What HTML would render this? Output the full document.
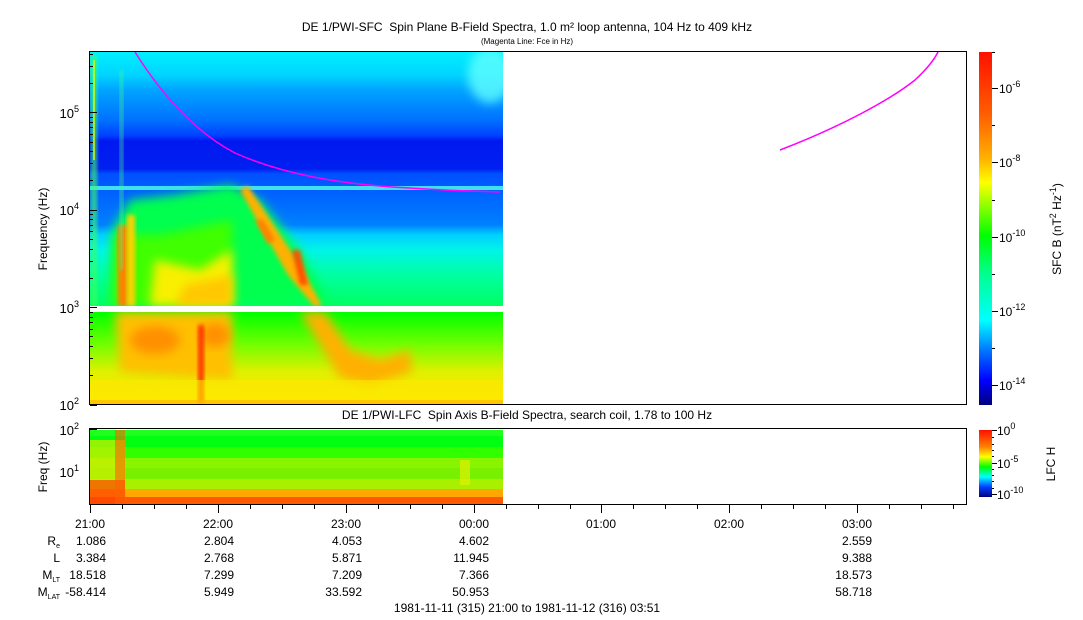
<!DOCTYPE html>
<html><head><meta charset="utf-8"><style>
html,body{margin:0;padding:0;background:#fff;}
svg{display:block;font-family:"Liberation Sans",Arial,sans-serif;}
</style></head><body>
<svg width="1083" height="620" viewBox="0 0 1083 620" xmlns="http://www.w3.org/2000/svg">
<defs>
<linearGradient id="up" x1="0" y1="52" x2="0" y2="306" gradientUnits="userSpaceOnUse">
<stop offset="0" stop-color="#00f0ff"/>
<stop offset="0.09" stop-color="#00d4ff"/>
<stop offset="0.15" stop-color="#00a4ff"/>
<stop offset="0.27" stop-color="#0070ff"/>
<stop offset="0.33" stop-color="#0040ff"/>
<stop offset="0.35" stop-color="#0018f0"/>
<stop offset="0.46" stop-color="#0020f0"/>
<stop offset="0.48" stop-color="#0050ff"/>
<stop offset="0.55" stop-color="#0060ff"/>
<stop offset="0.68" stop-color="#0080ff"/>
<stop offset="0.72" stop-color="#00d0ff"/>
<stop offset="0.78" stop-color="#00f4e8"/>
<stop offset="0.88" stop-color="#00ffa0"/>
<stop offset="1" stop-color="#00ff60"/>
</linearGradient>
<linearGradient id="lo" x1="0" y1="312" x2="0" y2="404" gradientUnits="userSpaceOnUse">
<stop offset="0" stop-color="#00ff00"/>
<stop offset="0.35" stop-color="#70ff00"/>
<stop offset="0.65" stop-color="#e0f000"/>
<stop offset="1" stop-color="#ffe800"/>
</linearGradient>
<linearGradient id="cb1" x1="0" y1="52" x2="0" y2="405" gradientUnits="userSpaceOnUse">
<stop offset="0" stop-color="#ff1000"/>
<stop offset="0.18" stop-color="#ff6000"/>
<stop offset="0.3" stop-color="#ffb000"/>
<stop offset="0.37" stop-color="#ffff00"/>
<stop offset="0.52" stop-color="#00ff00"/>
<stop offset="0.63" stop-color="#00ff90"/>
<stop offset="0.76" stop-color="#00ffff"/>
<stop offset="0.85" stop-color="#0070ff"/>
<stop offset="0.93" stop-color="#0000ff"/>
<stop offset="1" stop-color="#000080"/>
</linearGradient>
<linearGradient id="cb2" x1="0" y1="430" x2="0" y2="497" gradientUnits="userSpaceOnUse">
<stop offset="0" stop-color="#ff1000"/>
<stop offset="0.25" stop-color="#ff8000"/>
<stop offset="0.4" stop-color="#ffff00"/>
<stop offset="0.55" stop-color="#00ff00"/>
<stop offset="0.7" stop-color="#00ffff"/>
<stop offset="0.85" stop-color="#0040ff"/>
<stop offset="1" stop-color="#000080"/>
</linearGradient>
<filter id="bl" x="-20%" y="-20%" width="140%" height="140%"><feGaussianBlur stdDeviation="5"/></filter>
<filter id="bl2" x="-20%" y="-20%" width="140%" height="140%"><feGaussianBlur stdDeviation="2"/></filter>
<clipPath id="cu"><rect x="90" y="52" width="413" height="254"/></clipPath>
<clipPath id="cl"><rect x="90" y="312" width="413" height="92"/></clipPath>
</defs>

<text x="527" y="31" font-size="12" text-anchor="middle" xml:space="preserve">DE 1/PWI-SFC  Spin Plane B-Field Spectra, 1.0 m² loop antenna, 104 Hz to 409 kHz</text>
<text x="527" y="44" font-size="8" text-anchor="middle">(Magenta Line: Fce in Hz)</text>
<text x="527" y="419" font-size="12" text-anchor="middle" xml:space="preserve">DE 1/PWI-LFC  Spin Axis B-Field Spectra, search coil, 1.78 to 100 Hz</text>

<rect x="90" y="52" width="413" height="254" fill="url(#up)"/>
<g clip-path="url(#cu)">
<ellipse cx="490" cy="75" rx="22" ry="28" fill="#60ffff" filter="url(#bl)" opacity="0.8"/>
<rect x="90" y="186" width="413" height="4" fill="#40e0f0"/>
<path d="M110,306 L112,230 L130,200 L175,195 L230,185 L260,200 L300,250 L330,306 Z" fill="#00ff50" filter="url(#bl)"/>
<path d="M112,306 L115,235 L160,235 L232,220 L232,306 Z" fill="#40ff00" filter="url(#bl)"/>
<path d="M150,306 L155,260 L200,270 L232,250 L232,306 Z" fill="#f8f000" filter="url(#bl)"/>
<path d="M175,306 L185,285 L232,275 L232,306 Z" fill="#ffc800" filter="url(#bl)"/>
<rect x="118" y="225" width="10" height="81" fill="#ff8000" filter="url(#bl2)"/>
<rect x="127" y="215" width="8" height="91" fill="#ffd000" filter="url(#bl2)"/>
<path d="M240,190 L248,186 L300,265 L322,306 L314,306 L288,275 Z" fill="#ffb000" filter="url(#bl2)"/>
<path d="M255,220 L263,220 L275,240 L268,244 Z" fill="#ff8000" filter="url(#bl2)"/>
<path d="M292,250 L300,250 L308,285 L300,285 Z" fill="#ff5000" filter="url(#bl2)"/>
<rect x="91" y="55" width="6" height="251" fill="#40ff60" opacity="0.7" filter="url(#bl2)"/>
<rect x="93" y="60" width="2" height="100" fill="#e0ff00" opacity="0.7"/>
<rect x="120" y="70" width="3" height="200" fill="#40ff80" opacity="0.7" filter="url(#bl2)"/>
</g>

<rect x="90" y="312" width="413" height="92" fill="url(#lo)"/>
<g clip-path="url(#cl)">
<path d="M115,312 L232,312 L232,380 L120,372 Z" fill="#ffc000" filter="url(#bl)"/>
<ellipse cx="155" cy="340" rx="25" ry="14" fill="#ff9000" filter="url(#bl)"/>
<ellipse cx="215" cy="335" rx="15" ry="12" fill="#ff9000" filter="url(#bl)"/>
<rect x="198" y="325" width="6" height="79" fill="#ff3000" filter="url(#bl2)"/>
<path d="M300,312 L325,312 L350,350 L380,360 L410,350 L412,372 L370,385 L340,378 Z" fill="#ffb000" filter="url(#bl)"/>
<rect x="90" y="380" width="413" height="24" fill="#ffe800" opacity="0.6"/>
<rect x="90" y="400" width="413" height="4" fill="#ffb000" opacity="0.6"/>
</g>

<path fill="none" stroke="#ff00ff" stroke-width="1.5" d="M135,52 C165,100 200,135 235,153 C280,173 330,182 380,186 C430,190 470,191 500,192"/>
<path fill="none" stroke="#ff00ff" stroke-width="1.5" d="M780,150 C840,127 890,100 915,80 C928,68 934,60 938,52"/>

<rect x="89.5" y="51.5" width="877" height="353" fill="none" stroke="#000"/>
<rect x="89.5" y="428.5" width="877" height="76" fill="none" stroke="#000"/>

<g stroke="#000" stroke-width="1">
<path d="M90,405.5h7M90,307.5h7M90,210.5h7M90,112.5h7"/>
<path d="M90,375.5h3M90,358.5h3M90,346.5h3M90,336.5h3M90,329.5h3M90,322.5h3M90,317.5h3M90,312.5h3
M90,278.5h3M90,261.5h3M90,249.5h3M90,239.5h3M90,231.5h3M90,225.5h3M90,219.5h3M90,214.5h3
M90,180.5h3M90,163.5h3M90,151.5h3M90,142.5h3M90,134.5h3M90,127.5h3M90,122.5h3M90,117.5h3
M90,83.5h3M90,66.5h3M90,54.5h3"/>
<path d="M90,429.5h7M90,472.5h7"/>
<path d="M90,459.5h3M90,452.5h3M90,447.5h3M90,443.5h3M90,440.5h3M90,437.5h3M90,435.5h3M90,433.5h3
M90,474.5h3M90,477.5h3M90,479.5h3M90,482.5h3M90,486.5h3M90,490.5h3M90,495.5h3M90,502.5h3"/>
<path d="M90.5,505v8M218.5,505v8M346.5,505v8M474.5,505v8M601.5,505v8M729.5,505v8M857.5,505v8"/>
<path d="M122.5,505v4M154.5,505v4M186.5,505v4M250.5,505v4M282.5,505v4M314.5,505v4M378.5,505v4M410.5,505v4M442.5,505v4M506.5,505v4M538.5,505v4M570.5,505v4M633.5,505v4M665.5,505v4M697.5,505v4M761.5,505v4M793.5,505v4M825.5,505v4M889.5,505v4M921.5,505v4M953.5,505v4"/>
</g>

<g font-size="13" text-anchor="end">
<text x="79" y="118">10<tspan font-size="9" dy="-6">5</tspan></text>
<text x="79" y="215">10<tspan font-size="9" dy="-6">4</tspan></text>
<text x="79" y="313">10<tspan font-size="9" dy="-6">3</tspan></text>
<text x="79" y="410">10<tspan font-size="9" dy="-6">2</tspan></text>
<text x="79" y="435">10<tspan font-size="9" dy="-6">2</tspan></text>
<text x="79" y="477">10<tspan font-size="9" dy="-6">1</tspan></text>
</g>
<text transform="translate(47,229) rotate(-90)" font-size="12" text-anchor="middle">Frequency (Hz)</text>
<text transform="translate(47,467) rotate(-90)" font-size="12" text-anchor="middle">Freq (Hz)</text>

<rect x="979" y="52" width="13" height="353" fill="url(#cb1)"/>
<g stroke="#000"><path d="M992,88.5h6M992,162.5h6M992,237.5h6M992,311.5h6M992,385.5h6M992,125.5h3M992,200.5h3M992,274.5h3M992,348.5h3M992,52.5h3"/></g>
<g font-size="12">
<text x="999" y="93">10<tspan font-size="9" dy="-6">-6</tspan></text>
<text x="999" y="167">10<tspan font-size="9" dy="-6">-8</tspan></text>
<text x="999" y="242">10<tspan font-size="9" dy="-6">-10</tspan></text>
<text x="999" y="316">10<tspan font-size="9" dy="-6">-12</tspan></text>
<text x="999" y="390">10<tspan font-size="9" dy="-6">-14</tspan></text>
</g>
<text transform="translate(1061,229) rotate(-90)" font-size="12" text-anchor="middle">SFC B (nT<tspan font-size="9" dy="-5">2</tspan><tspan dy="5"> Hz</tspan><tspan font-size="9" dy="-5">-1</tspan><tspan dy="5">)</tspan></text>
<rect x="979" y="430" width="13" height="67" fill="url(#cb2)"/>
<g stroke="#000"><path d="M992,430.5h5M992,463.5h5M992,494.5h5M992,437.5h2M992,444.5h2M992,450.5h2M992,456.5h2M992,469.5h2M992,475.5h2M992,481.5h2M992,488.5h2"/></g>
<g font-size="12">
<text x="997" y="435">10<tspan font-size="9" dy="-6">0</tspan></text>
<text x="997" y="468">10<tspan font-size="9" dy="-6">-5</tspan></text>
<text x="997" y="499">10<tspan font-size="9" dy="-6">-10</tspan></text>
</g>
<text transform="translate(1055,464) rotate(-90)" font-size="12" text-anchor="middle">LFC H</text>

<g font-size="12" text-anchor="middle">
<text x="90" y="528">21:00</text><text x="218" y="528">22:00</text><text x="346" y="528">23:00</text><text x="474" y="528">00:00</text>
<text x="601" y="528">01:00</text><text x="729" y="528">02:00</text><text x="857" y="528">03:00</text>
</g>
<g font-size="12" text-anchor="end">
<text x="60" y="545">R<tspan font-size="7" dy="3">e</tspan></text>
<text x="60" y="562">L</text>
<text x="60" y="579">M<tspan font-size="7" dy="3">LT</tspan></text>
<text x="60" y="596">M<tspan font-size="7" dy="3">LAT</tspan></text>
<text x="106" y="545">1.086</text><text x="106" y="562">3.384</text><text x="106" y="579">18.518</text><text x="106" y="596">-58.414</text>
<text x="234" y="545">2.804</text><text x="234" y="562">2.768</text><text x="234" y="579">7.299</text><text x="234" y="596">5.949</text>
<text x="362" y="545">4.053</text><text x="362" y="562">5.871</text><text x="362" y="579">7.209</text><text x="362" y="596">33.592</text>
<text x="489" y="545">4.602</text><text x="489" y="562">11.945</text><text x="489" y="579">7.366</text><text x="489" y="596">50.953</text>
<text x="872" y="545">2.559</text><text x="872" y="562">9.388</text><text x="872" y="579">18.573</text><text x="872" y="596">58.718</text>
</g>
<text x="527" y="612" font-size="12" text-anchor="middle">1981-11-11 (315) 21:00 to 1981-11-12 (316) 03:51</text>

<g>
<rect x="90" y="430" width="413" height="6" fill="#20ff20"/>
<rect x="90" y="436" width="413" height="11" fill="#00ff10"/>
<rect x="90" y="447" width="413" height="11" fill="#30ff00"/>
<rect x="90" y="458" width="413" height="10" fill="#88f400"/>
<rect x="90" y="468" width="413" height="11" fill="#78f000"/>
<rect x="90" y="479" width="413" height="10" fill="#a8f000"/>
<rect x="90" y="489" width="413" height="8" fill="#ffa800"/>
<rect x="90" y="497" width="413" height="7" fill="#ff5a00"/>
<rect x="90" y="440" width="35" height="49" fill="#d0f000" opacity="0.7"/>
<rect x="90" y="480" width="35" height="24" fill="#ff4000" opacity="0.7"/>
<rect x="115" y="430" width="10" height="74" fill="#ff6000" opacity="0.6"/>
<rect x="460" y="460" width="10" height="25" fill="#e0f000" opacity="0.7"/>
</g>
</svg>
</body></html>
